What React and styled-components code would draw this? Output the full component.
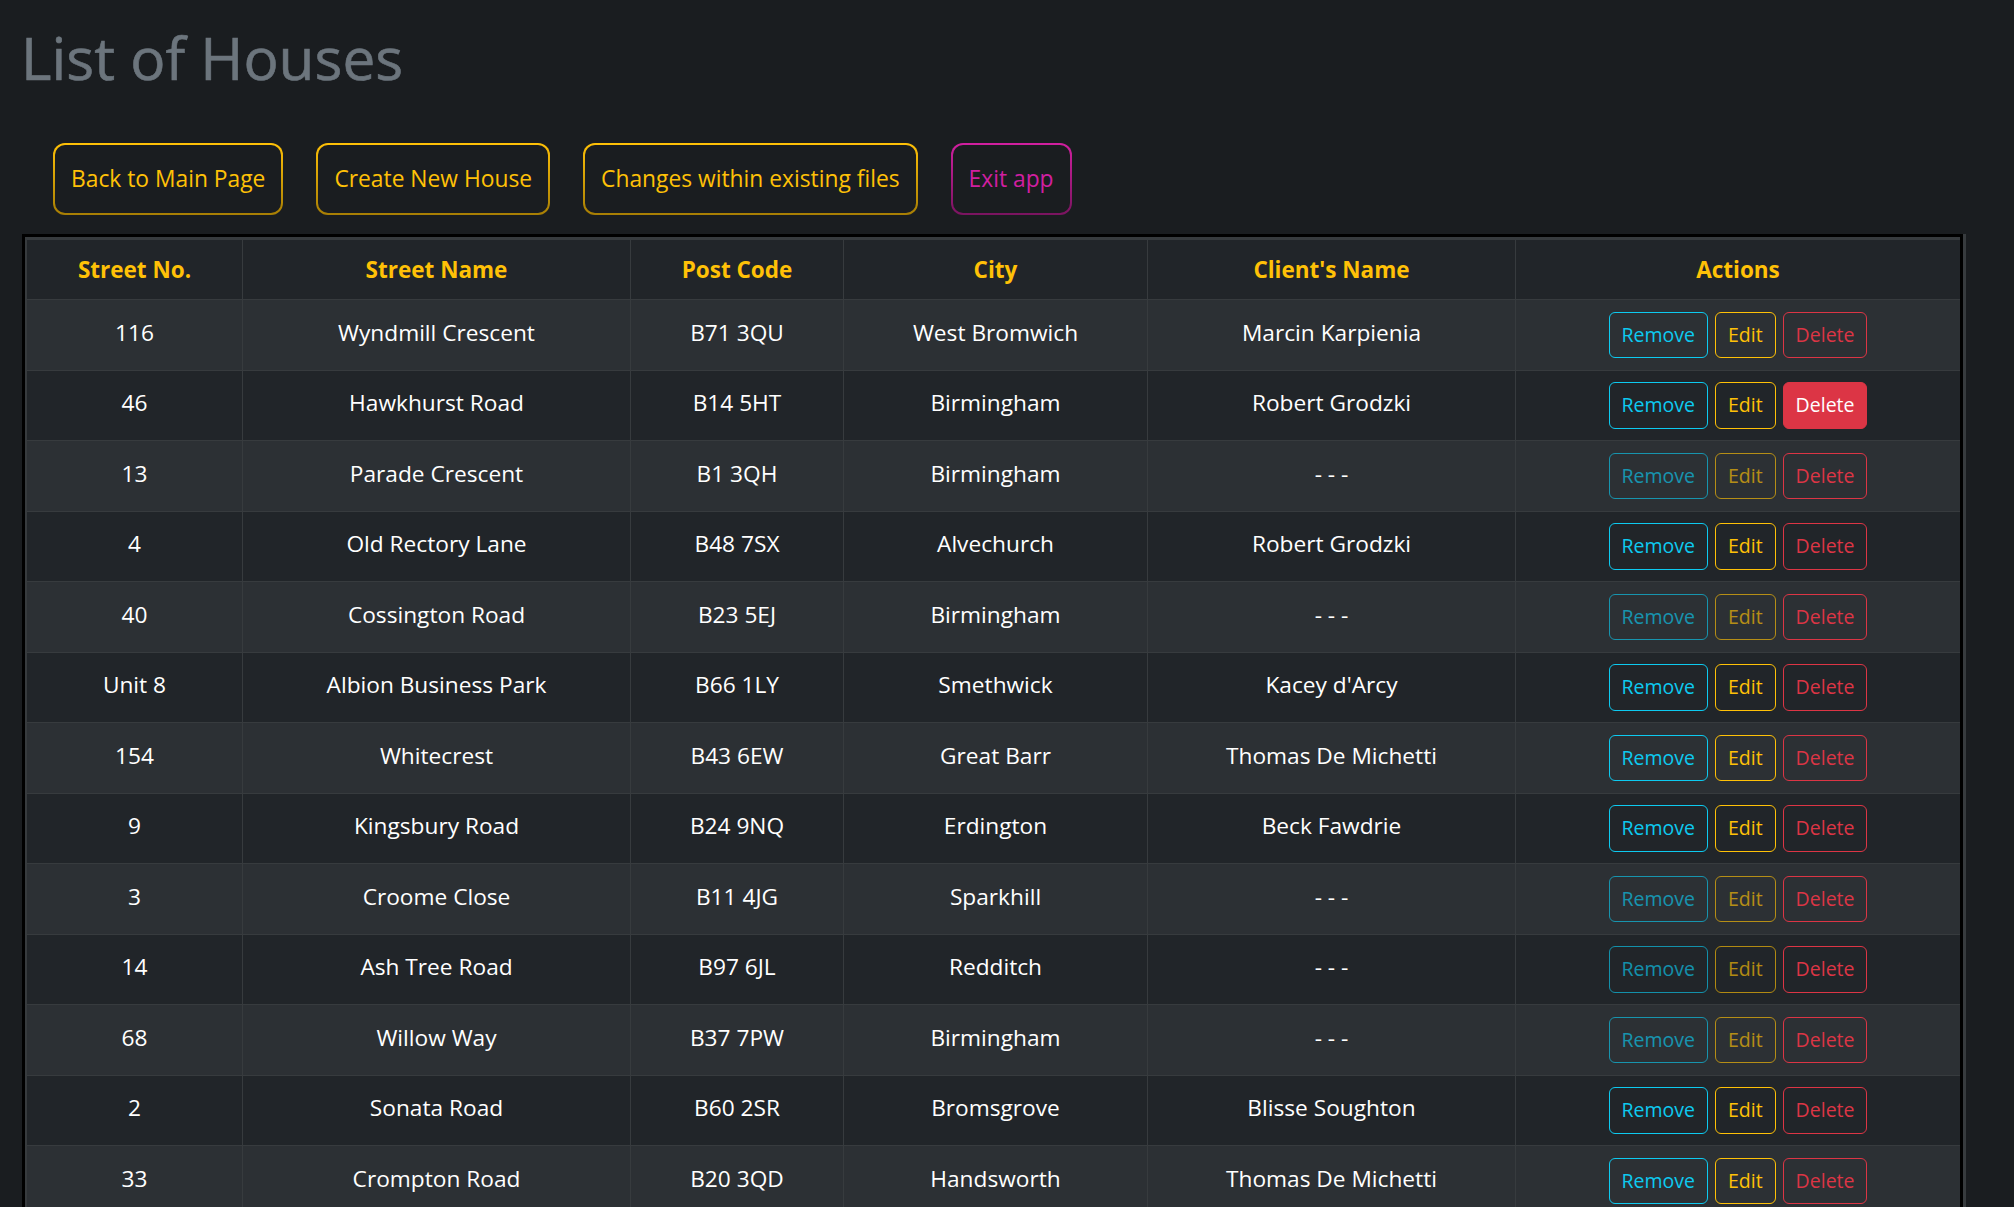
import React from "react";
import styled, { createGlobalStyle } from "styled-components";

const GlobalStyle = createGlobalStyle`
  * {
    box-sizing: border-box;
  }
  body {
    margin: 0;
    background: #1a1d20;
    color: #fff;
    font-family: "Open Sans", "Noto Sans", "Liberation Sans", sans-serif;
  }
`;

const Page = styled.div`
  padding: 0 22px;
`;

const Title = styled.h1`
  margin: 22px 0 0 -1px;
  font-size: 58.5px;
  font-weight: 400;
  line-height: 1.2;
  color: #6c757d;
  -webkit-text-stroke: 0.6px #6c757d;
`;

const Toolbar = styled.div`
  display: flex;
  gap: 33px;
  margin: 51px 0 0 31px;
`;

const navTones = {
  warning: ["#ffc107", "#a77e04"],
  pink: ["#d11fa0", "#7a1460"],
};

const NavButton = styled.button`
  padding: 16px 16px;
  border: 2px solid transparent;
  border-radius: 12px;
  background: linear-gradient(#1a1d20, #1a1d20) padding-box,
    linear-gradient(
        ${({ $tone }) => navTones[$tone][0]},
        ${({ $tone }) => navTones[$tone][1]}
      )
      border-box;
  color: ${({ $tone }) => navTones[$tone][0]};
  font-family: inherit;
  font-size: 22.8px;
  line-height: 36px;
  cursor: pointer;
`;

const Frame = styled.div`
  margin-top: 19px;
  width: 1941px;
  border: 3px solid #000;
  border-bottom: 0;
  box-shadow: 3px 0 0 #373b3e;
`;

const Table = styled.table`
  width: 1935px;
  table-layout: fixed;
  border-spacing: 0;
  border-top: 3px solid #373b3e;
  border-left: 2px solid #373b3e;
  font-size: 22.7px;
  text-align: center;
`;

const HeadCell = styled.th`
  padding: 12px 12px 11px;
  line-height: 36px;
  font-size: 22.5px;
  font-weight: 700;
  color: #ffc107;
  background: #212529;
  vertical-align: top;
  border-right: 1px solid #373b3e;
  border-bottom: 1px solid #373b3e;
  &:last-child {
    border-right: 0;
  }
`;

const Row = styled.tr`
  background: ${({ $striped }) => ($striped ? "#2c3034" : "#212529")};
`;

const Cell = styled.td`
  padding: 14.5px 12px 0;
  line-height: 36px;
  color: #fff;
  font-weight: 400;
  vertical-align: top;
  border-right: 1px solid #373b3e;
  border-bottom: 1px solid #373b3e;
`;

const ActionCell = styled(Cell)`
  padding: 11.5px 12px;
  vertical-align: middle;
  border-right: 0;
`;

const Actions = styled.div`
  display: flex;
  justify-content: center;
  gap: 7px;
`;

const actionTones = {
  info: "#0dcaf0",
  warning: "#ffc107",
  danger: "#dc3545",
};

const ActionButton = styled.button`
  padding: 6px 12px;
  border: 1px solid ${({ $tone }) => actionTones[$tone]};
  border-radius: 6px;
  background: ${({ $filled, $tone }) =>
    $filled ? actionTones[$tone] : "transparent"};
  color: ${({ $filled, $tone }) => ($filled ? "#fff" : actionTones[$tone])};
  font-family: inherit;
  font-size: 19.5px;
  line-height: 32.5px;
  opacity: ${({ disabled }) => (disabled ? 0.65 : 1)};
  cursor: ${({ disabled }) => (disabled ? "default" : "pointer")};
`;

const columns = [
  { label: "Street No.", width: 216 },
  { label: "Street Name", width: 388 },
  { label: "Post Code", width: 213 },
  { label: "City", width: 304 },
  { label: "Client's Name", width: 368 },
  { label: "Actions", width: 444 },
];

const houses = [
  ["116", "Wyndmill Crescent", "B71 3QU", "West Bromwich", "Marcin Karpienia"],
  ["46", "Hawkhurst Road", "B14 5HT", "Birmingham", "Robert Grodzki"],
  ["13", "Parade Crescent", "B1 3QH", "Birmingham", null],
  ["4", "Old Rectory Lane", "B48 7SX", "Alvechurch", "Robert Grodzki"],
  ["40", "Cossington Road", "B23 5EJ", "Birmingham", null],
  ["Unit 8", "Albion Business Park", "B66 1LY", "Smethwick", "Kacey d'Arcy"],
  ["154", "Whitecrest", "B43 6EW", "Great Barr", "Thomas De Michetti"],
  ["9", "Kingsbury Road", "B24 9NQ", "Erdington", "Beck Fawdrie"],
  ["3", "Croome Close", "B11 4JG", "Sparkhill", null],
  ["14", "Ash Tree Road", "B97 6JL", "Redditch", null],
  ["68", "Willow Way", "B37 7PW", "Birmingham", null],
  ["2", "Sonata Road", "B60 2SR", "Bromsgrove", "Blisse Soughton"],
  ["33", "Crompton Road", "B20 3QD", "Handsworth", "Thomas De Michetti"],
];

const App = () => {
  return (
    <>
      <GlobalStyle />
      <Page>
        <Title>List of Houses</Title>
        <Toolbar>
          <NavButton $tone="warning">Back to Main Page</NavButton>
          <NavButton $tone="warning">Create New House</NavButton>
          <NavButton $tone="warning">Changes within existing files</NavButton>
          <NavButton $tone="pink">Exit app</NavButton>
        </Toolbar>
        <Frame>
          <Table>
            <colgroup>
              {columns.map((col) => (
                <col key={col.label} style={{ width: col.width }} />
              ))}
            </colgroup>
            <thead>
              <tr>
                {columns.map((col) => (
                  <HeadCell key={col.label}>{col.label}</HeadCell>
                ))}
              </tr>
            </thead>
            <tbody>
              {houses.map(([no, street, code, city, client], i) => (
                <Row key={street} $striped={i % 2 === 0}>
                  <Cell>{no}</Cell>
                  <Cell>{street}</Cell>
                  <Cell>{code}</Cell>
                  <Cell>{city}</Cell>
                  <Cell>{client || "- - -"}</Cell>
                  <ActionCell>
                    <Actions>
                      <ActionButton $tone="info" disabled={!client}>
                        Remove
                      </ActionButton>
                      <ActionButton $tone="warning" disabled={!client}>
                        Edit
                      </ActionButton>
                      <ActionButton $tone="danger" $filled={i === 1}>
                        Delete
                      </ActionButton>
                    </Actions>
                  </ActionCell>
                </Row>
              ))}
            </tbody>
          </Table>
        </Frame>
      </Page>
    </>
  );
};

export default App;
